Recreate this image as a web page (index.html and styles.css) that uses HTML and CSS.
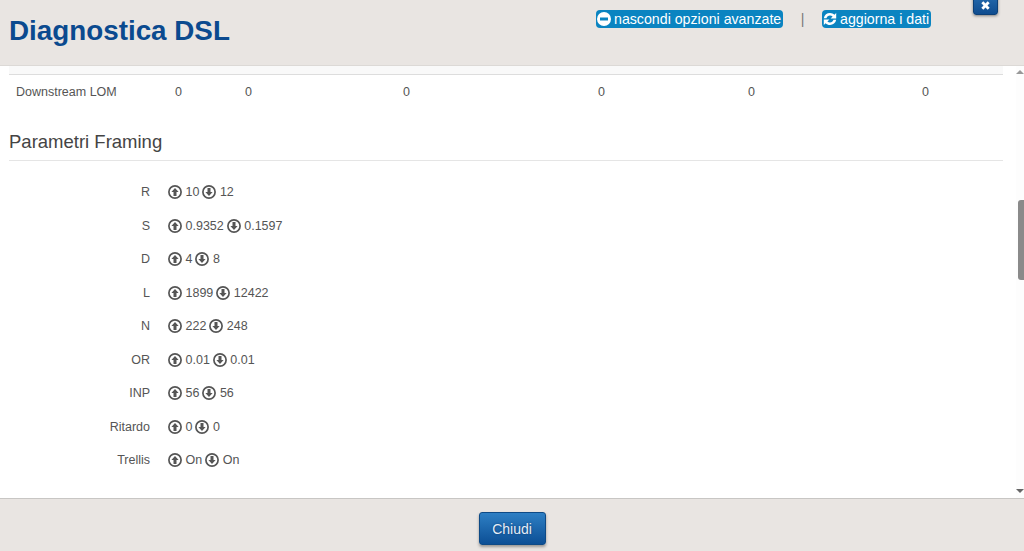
FILE: index.html
```html
<!DOCTYPE html>
<html lang="it">
<head>
<meta charset="utf-8">
<title>Diagnostica DSL</title>
<link rel="stylesheet" href="styles.css">
</head>
<body>
<svg class="defs" width="0" height="0" aria-hidden="true">
  <symbol id="up" viewBox="0 0 14 14"><circle cx="7" cy="7" r="6.100" fill="#fff" stroke="#555" stroke-width="1.700"/><path d="M7 2.900 10.600 7H8.500v3.900H5.500V7H3.400z" fill="#555"/></symbol>
  <symbol id="down" viewBox="0 0 14 14"><circle cx="7" cy="7" r="6.100" fill="#fff" stroke="#555" stroke-width="1.700"/><path d="M7 11.100 3.400 7h2.100V3.100h3V7h2.100z" fill="#555"/></symbol>
</svg>
<div class="modal">
  <header class="head">
    <h1 class="title">Diagnostica DSL</h1>
    <div class="actions">
      <a class="pill pill-hide"><svg class="pill-icon" viewBox="0 0 14 14"><circle cx="7" cy="7" r="7" fill="#fff"/><rect x="3" y="5.500" width="8" height="3" fill="#0a84c1"/></svg>nascondi opzioni avanzate</a>
      <span class="sep">|</span>
      <a class="pill pill-refresh"><svg class="pill-icon" viewBox="0 0 14 14"><path d="M.8 6.200C1.400 2.900 3.900 1 7 1c1.800 0 3.300.7 4.400 1.800L13.200 1v5.600H7.600l2-2C8.900 3.900 8 3.500 7 3.500c-1.700 0-3 1.100-3.500 2.700zM13.200 7.800C12.600 11.100 10.100 13 7 13c-1.800 0-3.300-.7-4.400-1.800L.8 13V7.400h5.600l-2 2c.7.700 1.600 1.100 2.600 1.100 1.700 0 3-1.100 3.500-2.700z" fill="#fff"/></svg>aggiorna i dati</a>
    </div>
    <button class="close" aria-label="Chiudi"><svg viewBox="0 0 10 10" width="11" height="11"><path d="M1.200 3 3 1.200l2 2 2-2L8.800 3l-2 2 2 2L7 8.800l-2-2-2 2L1.200 7l2-2z" fill="#fff"/></svg></button>
  </header>
  <main class="body">
    <div class="content">
      <div class="cut-row"></div>
      <table class="lom">
        <tr><td class="c1">Downstream LOM</td><td class="c2">0</td><td class="c3">0</td><td class="c4">0</td><td class="c5">0</td><td class="c6">0</td><td>0</td></tr>
      </table>
      <h2 class="section">Parametri Framing</h2>
      <dl class="params">
        <div class="param"><dt>R</dt><dd><svg class="arrow"><use href="#up"/></svg>10<svg class="arrow arrow-down"><use href="#down"/></svg>12</dd></div>
        <div class="param"><dt>S</dt><dd><svg class="arrow"><use href="#up"/></svg>0.9352<svg class="arrow arrow-down"><use href="#down"/></svg>0.1597</dd></div>
        <div class="param"><dt>D</dt><dd><svg class="arrow"><use href="#up"/></svg>4<svg class="arrow arrow-down"><use href="#down"/></svg>8</dd></div>
        <div class="param"><dt>L</dt><dd><svg class="arrow"><use href="#up"/></svg>1899<svg class="arrow arrow-down"><use href="#down"/></svg>12422</dd></div>
        <div class="param"><dt>N</dt><dd><svg class="arrow"><use href="#up"/></svg>222<svg class="arrow arrow-down"><use href="#down"/></svg>248</dd></div>
        <div class="param"><dt>OR</dt><dd><svg class="arrow"><use href="#up"/></svg>0.01<svg class="arrow arrow-down"><use href="#down"/></svg>0.01</dd></div>
        <div class="param"><dt>INP</dt><dd><svg class="arrow"><use href="#up"/></svg>56<svg class="arrow arrow-down"><use href="#down"/></svg>56</dd></div>
        <div class="param"><dt>Ritardo</dt><dd><svg class="arrow"><use href="#up"/></svg>0<svg class="arrow arrow-down"><use href="#down"/></svg>0</dd></div>
        <div class="param"><dt>Trellis</dt><dd><svg class="arrow"><use href="#up"/></svg>On<svg class="arrow arrow-down"><use href="#down"/></svg>On</dd></div>
      </dl>
    </div>
    <div class="scrollbar">
      <span class="tri tri-up"></span>
      <span class="thumb"></span>
      <span class="tri tri-down"></span>
    </div>
  </main>
  <footer class="foot"><button class="btn">Chiudi</button></footer>
</div>
</body>
</html>
```
FILE: styles.css
```css
* { box-sizing: border-box; }
html, body { margin: 0; height: 100%; overflow: hidden; }
body { font-family: "Liberation Sans", Arial, sans-serif; font-size: 12.5px; color: #555; background: #fff; }
.defs { position: absolute; }
.modal { height: 551px; display: flex; flex-direction: column; }
.head { position: relative; height: 66px; flex: none; display: flex; background: #e9e5e2; border-bottom: 1px solid #dcd9d6; }
.title { margin: 15px 0 0 9px; font-size: 27.8px; line-height: 32px; font-weight: bold; color: #0b4a8f; }
.actions { position: absolute; left: 596px; top: 10px; display: flex; align-items: center; height: 18px; }
.pill { display: flex; align-items: center; height: 18px; padding: 0 0 0 1px; border-radius: 4px; background: #0a84c1; color: #fff; font-size: 14.2px; white-space: nowrap; }
.pill-icon { width: 14px; height: 14px; margin-right: 3px; flex: none; }
.pill-hide { width: 187px; }
.pill-refresh { width: 109px; }
.sep { width: 39px; text-align: center; color: #777; font-size: 14px; }
.close { position: absolute; left: 973px; top: -10px; width: 25px; height: 25px; padding: 7px 0 0; border: 1px solid #0d4077; border-radius: 3px; background: linear-gradient(#2a72b5, #0f4c8f); box-shadow: 0 1px 3px rgba(0,0,0,.45); }
.body { flex: 1; min-height: 0; display: flex; background: #fff; }
.content { flex: 1; padding: 0 13px 0 9px; }
.cut-row { height: 9px; background: #f9f9f9; border-bottom: 1px solid #ddd; }
.lom { width: 100%; border-collapse: collapse; table-layout: fixed; }
.lom td { padding: 9px 7px 7px; line-height: 17px; height: 33px; }
.c1 { width: 159px; }
.c2 { width: 70px; }
.c3 { width: 158px; }
.c4 { width: 195px; }
.c5 { width: 150px; }
.c6 { width: 174px; }
.section { margin: 24px 0 0; padding-bottom: 8px; height: 29px; font-size: 18.5px; line-height: 20px; font-weight: normal; color: #444; border-bottom: 1px solid #e5e5e5; }
.params { margin: 14.5px 0 0; }
.param { display: flex; height: 33.5px; align-items: center; }
.param dt { width: 141px; text-align: right; }
.param dd { margin: 0 0 0 18px; display: flex; align-items: center; }
.arrow { width: 14px; height: 14px; margin: 0 3.5px 0 0; flex: none; }
.arrow-down { margin: 0 3.5px 0 3px; }
.scrollbar { width: 8px; flex: none; position: relative; display: flex; flex-direction: column; background: #fdfdfd; }
.thumb { position: absolute; left: 2px; right: -2px; top: 134px; height: 80px; background: #8a8a8a; border-radius: 3px 0 0 3px; }
.tri { position: absolute; right: 0; width: 0; height: 0; border-left: 4px solid transparent; border-right: 4px solid transparent; }
.tri-up { top: 4px; border-bottom: 4px solid #999; }
.tri-down { bottom: 5px; border-top: 4px solid #666; }
.foot { height: 53px; flex: none; display: flex; justify-content: center; padding-top: 13px; background: #e9e5e2; border-top: 1px solid #c8c6c4; }
.btn { width: 67px; height: 33px; border: 1px solid #0e4a86; border-radius: 3px; background: linear-gradient(#2e7fc4, #0c4f95); color: #e6eef8; font: 14px "Liberation Sans", Arial, sans-serif; text-shadow: 0 0 2px #0a3a6e; box-shadow: 0 2px 3px rgba(0,0,0,.35); }
```
